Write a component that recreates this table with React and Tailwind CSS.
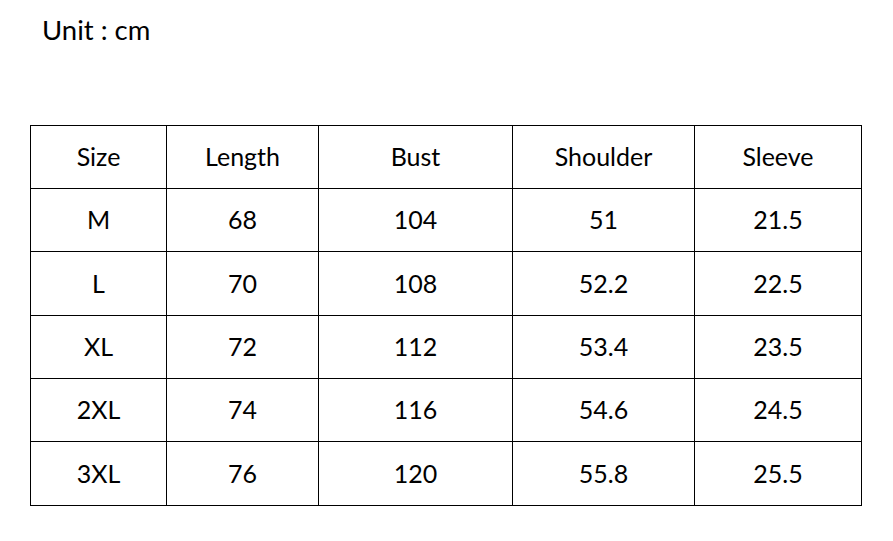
const headers = ["Size", "Length", "Bust", "Shoulder", "Sleeve"];
const rows = [
  ["M", "68", "104", "51", "21.5"],
  ["L", "70", "108", "52.2", "22.5"],
  ["XL", "72", "112", "53.4", "23.5"],
  ["2XL", "74", "116", "54.6", "24.5"],
  ["3XL", "76", "120", "55.8", "25.5"],
];

export default function App() {
  return (
    <div className="w-[893px] h-[541px] bg-white text-black font-['Lato','Open_Sans',sans-serif]">
      <div className="pl-[42px] pt-[14px] text-[27.5px] leading-[32px]">Unit : cm</div>
      <table className="ml-[30px] mt-[79px] w-[831px] table-fixed border-collapse text-[25px]">
        <colgroup>
          <col className="w-[136px]" />
          <col className="w-[152px]" />
          <col className="w-[194px]" />
          <col className="w-[182px]" />
          <col className="w-[167px]" />
        </colgroup>
        <thead>
          <tr className="h-[63px]">
            {headers.map((h) => (
              <th key={h} className="border border-black text-center font-normal p-0">
                {h}
              </th>
            ))}
          </tr>
        </thead>
        <tbody>
          {rows.map((r, i) => (
            <tr key={i} className={i === 1 || i === 4 ? "h-[64px]" : "h-[63px]"}>
              {r.map((c, j) => (
                <td key={j} className="border border-black text-center p-0">
                  {c}
                </td>
              ))}
            </tr>
          ))}
        </tbody>
      </table>
    </div>
  );
}
